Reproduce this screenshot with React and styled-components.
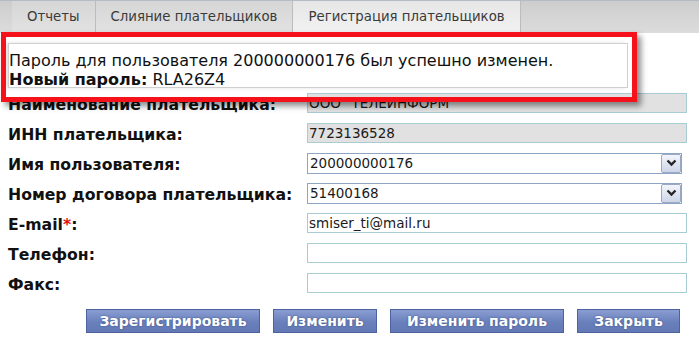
import React from "react"
import styled, { createGlobalStyle } from "styled-components"

const GlobalStyle = createGlobalStyle`
  body {
    margin: 0;
    background: #ffffff;
    font-family: "DejaVu Sans", Verdana, sans-serif;
  }
`

const tabs = ["Отчеты", "Слияние плательщиков", "Регистрация плательщиков"]

const fields = [
  { label: "Наименование плательщика:", value: "ООО \"ТЕЛЕИНФОРМ\"", kind: "readonly" },
  { label: "ИНН плательщика:", value: "7723136528", kind: "readonly" },
  { label: "Имя пользователя:", value: "200000000176", kind: "select" },
  { label: "Номер договора плательщика:", value: "51400168", kind: "select" },
  { label: "E-mail", value: "smiser_ti@mail.ru", kind: "input", required: true },
  { label: "Телефон:", value: "", kind: "input" },
  { label: "Факс:", value: "", kind: "input" },
]

const buttons = [
  { text: "Зарегистрировать", width: 174 },
  { text: "Изменить", width: 104 },
  { text: "Изменить пароль", width: 174 },
  { text: "Закрыть", width: 103 },
]

const Chevron = () => (
  <svg width="11" height="8" viewBox="0 0 11 8">
    <path d="M1.5 1.5 L5.5 5.5 L9.5 1.5" fill="none" stroke="#262626" strokeWidth="2.4" />
  </svg>
)

const App = () => {
  return (
    <>
      <GlobalStyle />
      <Page>
        <TabBar>
          {tabs.map((t, i) => (
            <Tab key={t} active={i === 2}>
              {t}
            </Tab>
          ))}
        </TabBar>

        <Message>
          <div>Пароль для пользователя 200000000176 был успешно изменен.</div>
          <div>
            <b>Новый пароль:</b> RLA26Z4
          </div>
        </Message>

        <Form>
          {fields.map((f) => (
            <Row key={f.label}>
              <Label>
                {f.label}
                {f.required && (
                  <>
                    <Star>*</Star>:
                  </>
                )}
              </Label>
              {f.kind === "select" ? (
                <Select>
                  <span>{f.value}</span>
                  <DropButton>
                    <Chevron />
                  </DropButton>
                </Select>
              ) : (
                <Field readOnly={f.kind === "readonly"}>{f.value}</Field>
              )}
            </Row>
          ))}
        </Form>

        <Buttons>
          {buttons.map((b) => (
            <Button key={b.text} width={b.width}>
              {b.text}
            </Button>
          ))}
        </Buttons>

        <Highlight />
      </Page>
    </>
  )
}

export default App

const Page = styled.div`
  position: relative;
  width: 699px;
  height: 342px;
  overflow: hidden;
`

const TabBar = styled.div`
  display: flex;
  height: 33px;
  padding-left: 12px;
  box-sizing: border-box;
  border-top: 1px solid #b4bac6;
  background: linear-gradient(#cdcdcd, #dcdcdc);
`

const Tab = styled.div`
  display: flex;
  align-items: center;
  padding: 0 15px 1px;
  font-size: 13.3px;
  color: #3a3a3a;
  border-right: 1px solid #bcbcbc;
  background: ${(p) => (p.active ? "linear-gradient(#e6e6e6, #f2f2f2)" : "linear-gradient(#d6d6d6, #e2e2e2)")};
`

const Message = styled.div`
  margin: 10px 71px 0 8px;
  height: 45px;
  box-sizing: border-box;
  border: 1px solid #cfcfcf;
  padding: 7px 0 0 0;
  font-size: 16px;
  line-height: 19px;
  color: #111;
  background: #fff;
  white-space: nowrap;
  box-shadow: -3px 0 4px rgba(0, 0, 0, 0.12);
`

const Form = styled.div`
  display: flex;
  flex-direction: column;
`

const Row = styled.div`
  display: grid;
  grid-template-columns: 299px 380px;
  align-items: center;
  height: 30px;
  padding-left: 8px;
`

const Label = styled.div`
  font-size: 15.7px;
  font-weight: bold;
  color: #111;
  white-space: nowrap;
  padding-top: 2px;
`

const Star = styled.span`
  color: #e01010;
`

const Field = styled.div`
  height: 20px;
  box-sizing: border-box;
  border: 1px solid #a9cbd3;
  background: ${(p) => (p.readOnly ? "#e1e1e1" : "#ffffff")};
  font-size: 13.5px;
  line-height: 18px;
  padding-left: 1px;
  color: #1a1a1a;
  white-space: nowrap;
  overflow: hidden;
`

const Select = styled.div`
  display: flex;
  align-items: center;
  justify-content: space-between;
  width: 375px;
  height: 21px;
  box-sizing: border-box;
  border: 1px solid #8ea6c4;
  background: #fff;
  font-size: 13.5px;
  color: #1a1a1a;
  padding-left: 2px;
`

const DropButton = styled.div`
  display: flex;
  align-items: center;
  justify-content: center;
  width: 20px;
  height: 19px;
  box-sizing: border-box;
  border: 1px solid #9aa9c4;
  border-radius: 2px;
  background: linear-gradient(#f3f5fa, #cdd5e6);
`

const Buttons = styled.div`
  display: flex;
  justify-content: flex-end;
  gap: 13px;
  margin-top: 11px;
  padding-right: 19px;
`

const Button = styled.div`
  width: ${(p) => p.width}px;
  height: 24px;
  box-sizing: border-box;
  display: flex;
  align-items: center;
  justify-content: center;
  border: 1px solid #4d63a0;
  background: linear-gradient(#8a9ed2, #6a80bc 55%, #6379b6);
  color: #ffffff;
  font-size: 14px;
  font-weight: bold;
  text-shadow: 0 0 2px rgba(30, 40, 90, 0.6);
`

const Highlight = styled.div`
  position: absolute;
  left: 1px;
  top: 32px;
  width: 636px;
  height: 70px;
  box-sizing: border-box;
  border: 5px solid #f5121b;
  box-shadow: 4px 4px 6px rgba(0, 0, 0, 0.45);
  pointer-events: none;
`
